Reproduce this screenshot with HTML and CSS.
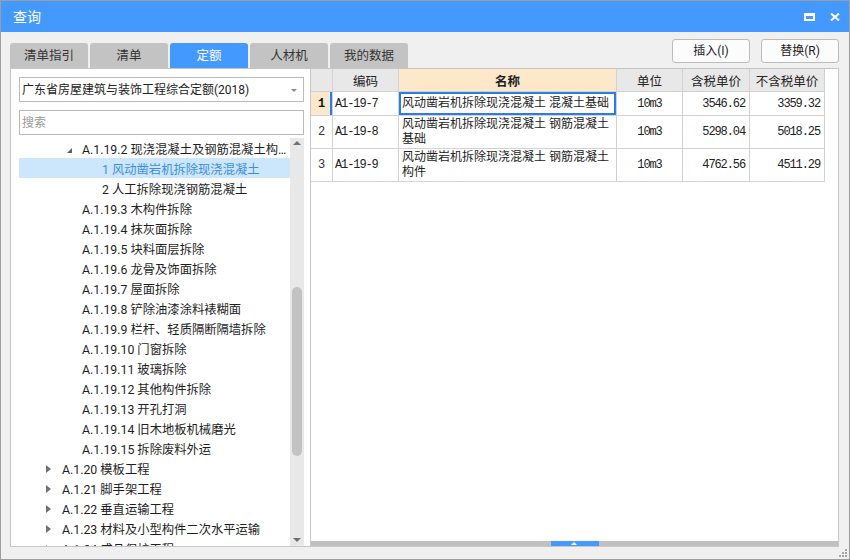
FILE: index.html
```html
<!DOCTYPE html>
<html lang="zh-CN">
<head>
<meta charset="utf-8">
<title>查询</title>
<link rel="stylesheet" href="styles.css">
</head>
<body>
<div class="window">
  <div class="titlebar">
    <span class="title">查询</span>
    <div class="win-btns">
      <svg class="ico-max" width="11" height="8" viewBox="0 0 11 8"><path fill="#fff" fill-rule="evenodd" d="M0 0h11v8H0z M2 3h7v3H2z"/></svg>
      <svg class="ico-close" width="10" height="8" viewBox="0 0 10 8"><path d="M1 0.5L9 7.5M9 0.5L1 7.5" stroke="#fff" stroke-width="2" fill="none"/></svg>
    </div>
  </div>

  <div class="toolbar">
    <div class="tabs">
      <div class="tab">清单指引</div>
      <div class="tab">清单</div>
      <div class="tab active">定额</div>
      <div class="tab">人材机</div>
      <div class="tab">我的数据</div>
    </div>
    <div class="actions">
      <button class="btn">插入(I)</button>
      <button class="btn">替换(R)</button>
    </div>
  </div>

  <div class="main">
    <div class="left">
      <div class="combo"><span class="combo-text">广东省房屋建筑与装饰工程综合定额(2018)</span><span class="caret"></span></div>
      <div class="search">搜索</div>
      <div class="tree">
        <div class="rows">
          <div class="row l3"><span class="exp open"></span><span class="txt">A.1.19.2 现浇混凝土及钢筋混凝土构件拆除</span></div>
          <div class="row l4 selected"><span class="exp"></span><span class="txt">1 风动凿岩机拆除现浇混凝土</span></div>
          <div class="row l4"><span class="exp"></span><span class="txt">2 人工拆除现浇钢筋混凝土</span></div>
          <div class="row l3"><span class="exp"></span><span class="txt">A.1.19.3 木构件拆除</span></div>
          <div class="row l3"><span class="exp"></span><span class="txt">A.1.19.4 抹灰面拆除</span></div>
          <div class="row l3"><span class="exp"></span><span class="txt">A.1.19.5 块料面层拆除</span></div>
          <div class="row l3"><span class="exp"></span><span class="txt">A.1.19.6 龙骨及饰面拆除</span></div>
          <div class="row l3"><span class="exp"></span><span class="txt">A.1.19.7 屋面拆除</span></div>
          <div class="row l3"><span class="exp"></span><span class="txt">A.1.19.8 铲除油漆涂料裱糊面</span></div>
          <div class="row l3"><span class="exp"></span><span class="txt">A.1.19.9 栏杆、轻质隔断隔墙拆除</span></div>
          <div class="row l3"><span class="exp"></span><span class="txt">A.1.19.10 门窗拆除</span></div>
          <div class="row l3"><span class="exp"></span><span class="txt">A.1.19.11 玻璃拆除</span></div>
          <div class="row l3"><span class="exp"></span><span class="txt">A.1.19.12 其他构件拆除</span></div>
          <div class="row l3"><span class="exp"></span><span class="txt">A.1.19.13 开孔打洞</span></div>
          <div class="row l3"><span class="exp"></span><span class="txt">A.1.19.14 旧木地板机械磨光</span></div>
          <div class="row l3"><span class="exp"></span><span class="txt">A.1.19.15 拆除废料外运</span></div>
          <div class="row l2"><span class="exp closed"></span><span class="txt">A.1.20 模板工程</span></div>
          <div class="row l2"><span class="exp closed"></span><span class="txt">A.1.21 脚手架工程</span></div>
          <div class="row l2"><span class="exp closed"></span><span class="txt">A.1.22 垂直运输工程</span></div>
          <div class="row l2"><span class="exp closed"></span><span class="txt">A.1.23 材料及小型构件二次水平运输</span></div>
          <div class="row l2"><span class="exp closed"></span><span class="txt">A.1.24 成品保护工程</span></div>
        </div>
        <div class="vscroll">
          <span class="arr-up"></span>
          <span class="thumb"></span>
          <span class="arr-down"></span>
        </div>
      </div>
    </div>

    <div class="right">
      <div class="grid">
        <div class="c hd rh"></div>
        <div class="c hd">编码</div>
        <div class="c hd hl">名称</div>
        <div class="c hd">单位</div>
        <div class="c hd">含税单价</div>
        <div class="c hd">不含税单价</div>

        <div class="c rn cur">1</div>
        <div class="c code">A1-19-7</div>
        <div class="c name sel">风动凿岩机拆除现浇混凝土 混凝土基础</div>
        <div class="c unit">10m3</div>
        <div class="c num">3546.62</div>
        <div class="c num">3359.32</div>

        <div class="c rn">2</div>
        <div class="c code">A1-19-8</div>
        <div class="c name">风动凿岩机拆除现浇混凝土 钢筋混凝土基础</div>
        <div class="c unit">10m3</div>
        <div class="c num">5298.04</div>
        <div class="c num">5018.25</div>

        <div class="c rn">3</div>
        <div class="c code">A1-19-9</div>
        <div class="c name">风动凿岩机拆除现浇混凝土 钢筋混凝土构件</div>
        <div class="c unit">10m3</div>
        <div class="c num">4762.56</div>
        <div class="c num">4511.29</div>
      </div>
      <div class="fill"></div>
      <div class="hscroll"><span class="hthumb"></span></div>
    </div>
  </div>

  <div class="bottom">
    <svg class="grip" width="9" height="9" viewBox="0 0 9 9">
      <rect x="6" y="0" width="2" height="2" fill="#a8a8a8"/>
      <rect x="3" y="3" width="2" height="2" fill="#a8a8a8"/>
      <rect x="6" y="3" width="2" height="2" fill="#a8a8a8"/>
      <rect x="0" y="6" width="2" height="2" fill="#a8a8a8"/>
      <rect x="3" y="6" width="2" height="2" fill="#a8a8a8"/>
      <rect x="6" y="6" width="2" height="2" fill="#a8a8a8"/>
    </svg>
  </div>
</div>
</body>
</html>
```

FILE: styles.css
```css
* { box-sizing: border-box; }

html, body {
  margin: 0;
  padding: 0;
  background: #f0f0f0;
}

body {
  font-family: Roboto, "Noto Sans CJK SC", sans-serif;
  font-size: 12px;
  color: #222;
}

.window {
  width: 850px;
  height: 560px;
  border: 1px solid #9e9e9e;
  background: #f0f0f0;
  display: flex;
  flex-direction: column;
  overflow: hidden;
}

/* title bar */
.titlebar {
  height: 31px;
  flex: none;
  background: #4499fe;
  display: flex;
  align-items: center;
  justify-content: space-between;
  padding: 0 9px 0 12px;
}

.title {
  color: #fff;
  font-size: 14px;
  line-height: 16px;
}

.win-btns {
  display: flex;
  align-items: center;
  gap: 15px;
  padding-top: 1px;
}

.win-btns svg { display: block; }

/* toolbar with tabs and buttons */
.toolbar {
  height: 36px;
  flex: none;
  display: flex;
  justify-content: space-between;
  padding: 0 10px 0 9px;
}

.tabs {
  display: flex;
  align-items: flex-end;
  gap: 2px;
}

.tab {
  width: 78px;
  height: 25px;
  background: #c3c3c3;
  border-radius: 3px 3px 0 0;
  text-align: center;
  line-height: 26px;
  font-size: 12.5px;
  color: #333;
}

.tab.active {
  background: #4499fe;
  color: #fff;
}

.actions {
  display: flex;
  gap: 11px;
  padding-top: 7px;
}

.btn {
  width: 78px;
  height: 24px;
  border: 1px solid #bcbcbc;
  border-radius: 3px;
  background: #fcfcfc;
  font-family: Roboto, "Noto Sans CJK SC", sans-serif;
  font-size: 12px;
  color: #222;
  padding: 0;
  line-height: 22px;
}

/* main split */
.main {
  height: 479px;
  flex: none;
  display: flex;
  padding: 0 10px 0 9px;
}

.left {
  width: 301px;
  flex: none;
  background: #fff;
  border: 1px solid #c6c6c6;
  display: flex;
  flex-direction: column;
  padding: 8px 6px 0 8px;
}

.combo {
  height: 25px;
  flex: none;
  border: 1px solid #bababa;
  display: flex;
  align-items: center;
  justify-content: space-between;
  padding: 1px 6px 0 2px;
  background: #fff;
}

.combo-text {
  line-height: 16px;
}

.caret {
  width: 0;
  height: 0;
  border-left: 3px solid transparent;
  border-right: 3px solid transparent;
  border-top: 3px solid #8a8a8a;
}

.search {
  height: 25px;
  flex: none;
  margin-top: 8px;
  border: 1px solid #bababa;
  padding: 1px 2px 0;
  line-height: 23px;
  color: #9a9a9a;
}

.tree {
  flex: 1;
  margin-top: 3px;
  display: flex;
  overflow: hidden;
  min-height: 0;
}

.rows {
  width: 271px;
  flex: none;
}

.row {
  height: 20px;
  display: flex;
  align-items: flex-start;
  white-space: nowrap;
  color: #1e1e1e;
}

.row.l2 { padding-left: 27px; }
.row.l3 { padding-left: 47px; }
.row.l4 { padding-left: 67px; }

.row.selected {
  background: #cce6fc;
  color: #3a8ee6;
}

.exp {
  width: 16px;
  height: 20px;
  flex: none;
  position: relative;
}

.exp.closed::before {
  content: "";
  position: absolute;
  left: 0;
  top: 7px;
  border-left: 5px solid #707070;
  border-top: 4px solid transparent;
  border-bottom: 4px solid transparent;
}

.exp.open::before {
  content: "";
  position: absolute;
  left: 1px;
  top: 10px;
  border-left: 5px solid transparent;
  border-bottom: 5px solid #606060;
}

.txt {
  overflow: hidden;
  text-overflow: ellipsis;
  padding: 2px 0 0 0;
  line-height: 20px;
  font-size: 12.3px;
}

.vscroll {
  width: 14px;
  flex: none;
  background: #e8e8e8;
  position: relative;
}

.arr-up {
  position: absolute;
  left: 3px;
  top: 3px;
  border-left: 4px solid transparent;
  border-right: 4px solid transparent;
  border-bottom: 4px solid #707070;
}

.arr-down {
  position: absolute;
  left: 3px;
  bottom: 4px;
  border-left: 4px solid transparent;
  border-right: 4px solid transparent;
  border-top: 4px solid #707070;
}

.thumb {
  position: absolute;
  left: 2px;
  top: 149px;
  width: 10px;
  height: 169px;
  background: #c2c2c2;
  border-radius: 5px;
}

/* right panel */
.right {
  flex: 1;
  background: #fff;
  border: 1px solid #c6c6c6;
  border-left: none;
  display: flex;
  flex-direction: column;
}

.grid {
  display: grid;
  grid-template-columns: 22px 66px 218px 66px 67px 75px;
  grid-template-rows: 23px 24px 33px 33px;
  flex: none;
}

.c {
  border-right: 1px solid #d2d2d2;
  border-bottom: 1px solid #d2d2d2;
  display: flex;
  align-items: center;
  overflow: hidden;
}

.hd {
  background: #e8e8e8;
  justify-content: center;
  font-size: 12.5px;
  color: #222;
}

.hd.hl {
  background: #fde8cb;
  font-weight: bold;
}

.rn {
  justify-content: center;
  font-family: "Liberation Mono", monospace;
  font-size: 12px;
  color: #333;
}

.rn.cur {
  background: #fde8cb;
  font-weight: bold;
  color: #111;
  box-shadow: inset -2px 0 0 #2b7de5;
}

.code {
  font-family: "Liberation Mono", monospace;
  font-size: 12px;
  letter-spacing: -1.1px;
  padding-left: 2px;
}

.name {
  padding: 0 3px;
  line-height: 15px;
}

.name.sel {
  box-shadow: inset 0 0 0 2px #2b7de5;
}

.unit {
  justify-content: center;
  font-family: "Liberation Mono", monospace;
  font-size: 12px;
  letter-spacing: -1.1px;
}

.num {
  justify-content: flex-end;
  padding-right: 4px;
  font-family: "Liberation Mono", monospace;
  font-size: 12px;
  letter-spacing: -1.1px;
}

.fill { flex: 1; }

.hscroll {
  height: 5px;
  flex: none;
  background: #c0c0c0;
  display: flex;
  justify-content: center;
}

.hthumb {
  width: 48px;
  height: 5px;
  background: #4499fe;
  position: relative;
}

.hthumb::after {
  content: "";
  position: absolute;
  left: 20px;
  top: 1px;
  border-left: 3px solid transparent;
  border-right: 3px solid transparent;
  border-bottom: 3px solid #fff;
}

.bottom {
  flex: 1;
  display: flex;
  justify-content: flex-end;
  align-items: flex-end;
  padding: 0 1px 1px 0;
}

.grip { display: block; }
```
